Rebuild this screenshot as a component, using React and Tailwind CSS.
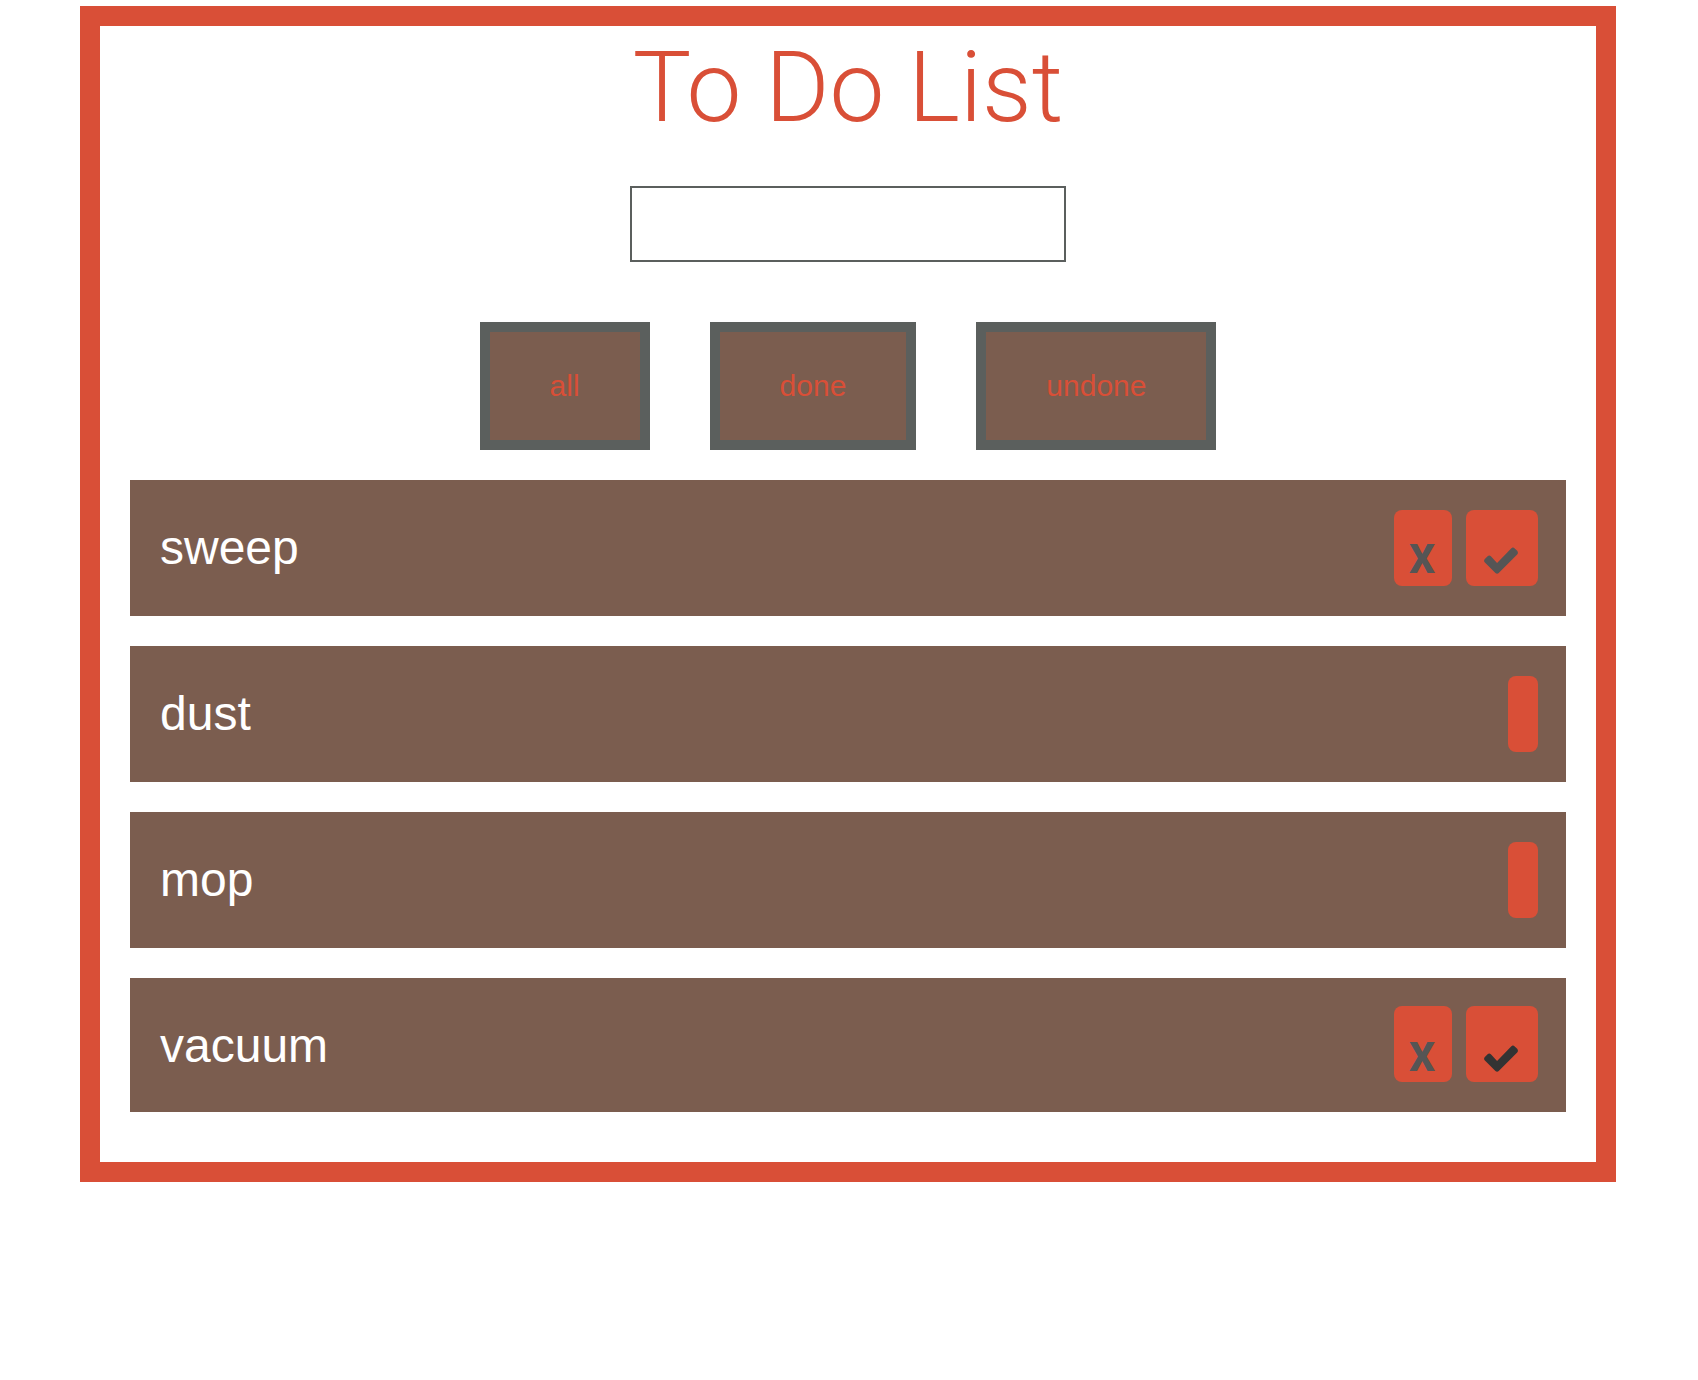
import { useState } from "react";

const tasks = [
  { name: "sweep", editable: true, checkColor: "text-[#555555]", row: "pb-[30px]", actions: "pt-[30px]", content: "pb-3" },
  { name: "dust", editable: false, row: "pb-[30px]", actions: "pt-[30px]" },
  { name: "mop", editable: false, row: "pb-[30px]", actions: "pt-[30px]" },
  { name: "vacuum", editable: true, checkColor: "text-[#333333]", row: "pb-7", actions: "pt-7", content: "pb-2.5" },
];

const filters = ["all", "done", "undone"];

function CheckIcon() {
  return (
    <svg viewBox="0 0 104 81" className="h-[27px] w-[34px]" fill="currentColor" aria-hidden="true">
      <path d="M2 37L11 27.500Q16 23 21 27.500L40 48.500L83 3.500Q88.500-1.500 94 3.500L101.500 11Q106 17 101.500 22.500L45 78.500Q40 83 35 78.500L2 46Q-1.500 41.500 2 37Z" />
    </svg>
  );
}

function Task({ task }) {
  return (
    <li className={`flex items-start justify-between bg-[#7b5d4f] pr-7 pl-[30px] ${task.row}`}>
      <span className="pt-[30px] text-5xl leading-[76px] text-white">{task.name}</span>
      <div className={`flex gap-3.5 ${task.actions}`}>
        {task.editable ? (
          <>
            <button
              type="button"
              aria-label={`Delete ${task.name}`}
              className={`flex h-[76px] w-[58px] items-end justify-center rounded-lg bg-[#d94f37] pr-0.5 font-[Roboto,sans-serif] text-[41px] leading-[30px] font-extrabold text-[#555555] ${task.content}`}
            >
              X
            </button>
            <button
              type="button"
              aria-label={`Complete ${task.name}`}
              className={`flex h-[76px] w-[72px] items-end justify-center rounded-lg bg-[#d94f37] pr-0.5 ${task.content} ${task.checkColor}`}
            >
              <CheckIcon />
            </button>
          </>
        ) : (
          <button
            type="button"
            aria-label={`Restore ${task.name}`}
            className="h-[76px] w-[30px] rounded-lg bg-[#d94f37]"
          />
        )}
      </div>
    </li>
  );
}

export default function App() {
  const [draft, setDraft] = useState("");

  return (
    <div className="bg-white pt-1.5 font-['Liberation_Sans',sans-serif]">
      <main className="mr-[82px] ml-20 border-20 border-[#d94f37] px-[30px] pb-[50px]">
        <h1 className="text-center font-[Roboto,sans-serif] text-[98px] leading-[124px] font-light text-[#d94f37]">
          To Do List
        </h1>
        <form className="mt-9 flex justify-center" onSubmit={(e) => e.preventDefault()}>
          <input
            type="text"
            aria-label="New task"
            value={draft}
            onChange={(e) => setDraft(e.target.value)}
            className="h-[76px] w-[436px] border-2 border-[#5b5f5d] bg-white px-4 text-[30px] outline-none"
          />
        </form>
        <div className="mt-[60px] flex justify-center gap-[60px]">
          {filters.map((filter) => (
            <button
              key={filter}
              type="button"
              className="h-32 border-10 border-[#5b5f5d] bg-[#7b5d4f] px-[60px] pb-0.5 text-[30px] text-[#d94f37]"
            >
              {filter}
            </button>
          ))}
        </div>
        <ul className="mt-[30px] flex flex-col gap-[30px]">
          {tasks.map((task) => (
            <Task key={task.name} task={task} />
          ))}
        </ul>
      </main>
    </div>
  );
}
